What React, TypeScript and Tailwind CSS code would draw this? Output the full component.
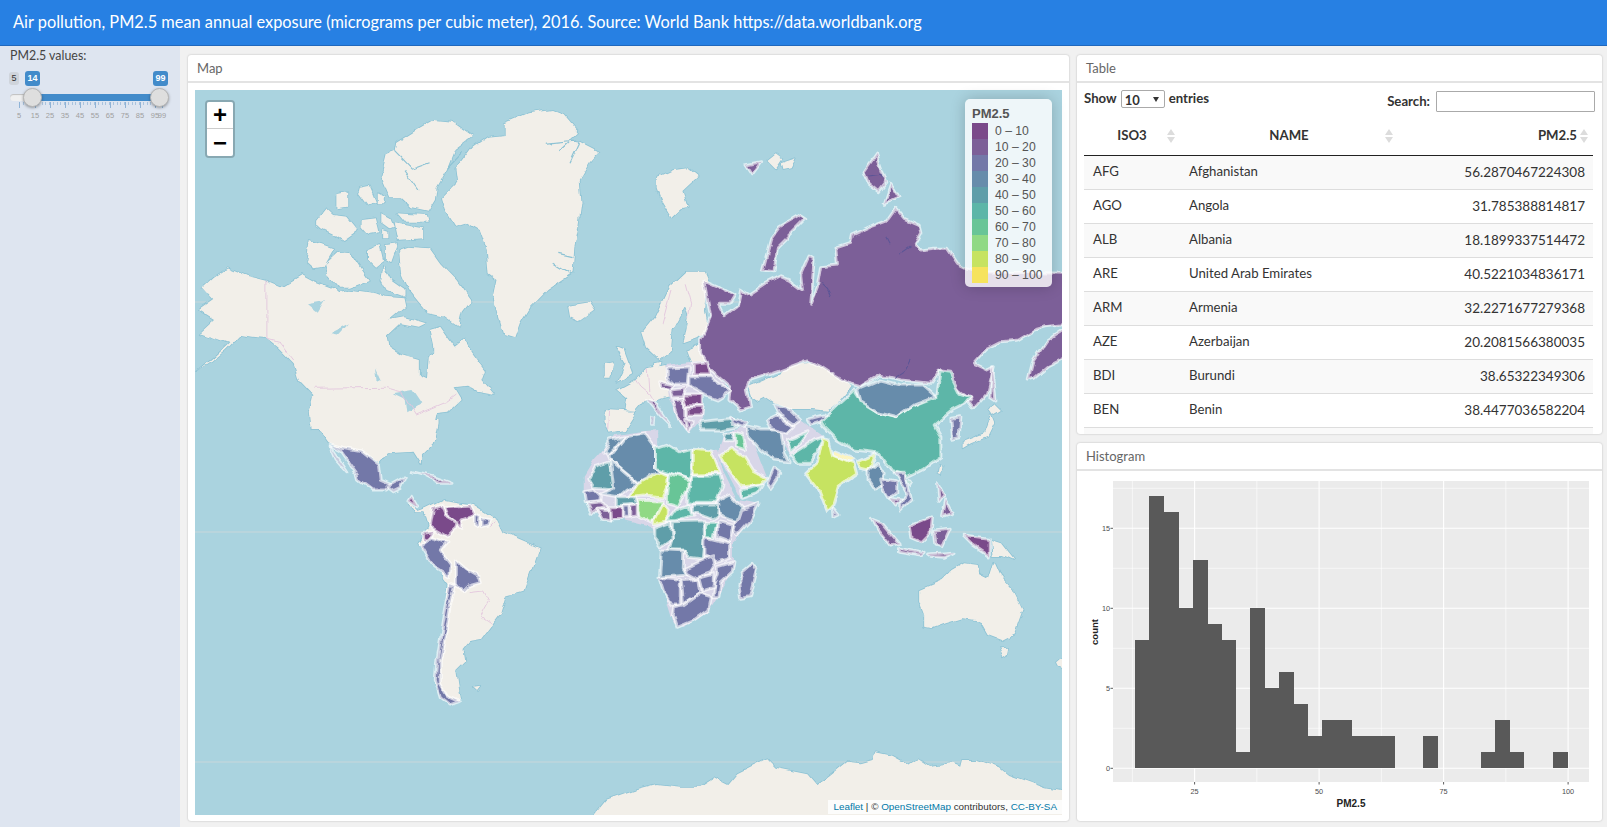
import React from "react";

type Origin = [number, number, number, number];

// crop origins the outlines were traced in
const Z6: Origin = [560, 340, 1 / 3, 1 / 3];
const Z7: Origin = [190, 90, 1 / 2.8, 1 / 3];
const Z8: Origin = [700, 140, 1 / 3, 1 / 3];
const Z9: Origin = [300, 420, 1 / 3, 1 / 3];
const Z10: Origin = [700, 640, 1 / 3, 1 / 3];
const Z11: Origin = [880, 540, 1 / 3, 1 / 3];

function toPage(o: Origin, pts: string) {
  return pts
    .trim()
    .split(/\s+/)
    .map((p) => {
      const [x, y] = p.split(",").map(Number);
      return `${(o[0] + x * o[2]).toFixed(1)},${(o[1] + y * o[3]).toFixed(1)}`;
    })
    .join(" ");
}

const C = [
  "#7a4a8a",
  "#7c5f98",
  "#7378a8",
  "#678cab",
  "#5f9ea9",
  "#5db6a8",
  "#68c597",
  "#90d985",
  "#c6e361",
  "#f6e35d",
];

const land: [Origin, string][] = [
  [Z7, "35,595 70,560 105,535 150,555 215,572 255,590 310,555 345,575 405,600 415,610 455,600 520,610 545,620 600,625 605,650 560,690 600,682 630,690 660,700 640,710 590,700 550,740 555,770 590,795 640,810 640,855 660,865 665,800 680,790 680,770 670,720 700,710 740,770 765,750 790,790 825,840 815,870 850,915 800,905 775,890 740,895 760,930 725,965 690,970 680,1020 340,1020 335,960 345,915 305,870 290,820 245,770 215,745 170,740 140,735 100,780 60,815 20,845 70,800 110,760 60,740 30,730 70,690 25,660 65,630"],
  [Z7, "945,70 1010,60 1045,75 1085,125 1060,150 1090,155 1145,185 1120,215 1090,270 1095,340 1085,420 1075,470 1070,550 1000,600 950,655 925,700 910,745 880,735 865,680 850,620 860,570 835,550 830,480 810,420 770,395 740,405 715,360 705,325 750,275 745,235 790,170 830,140 880,135 880,100"],
  [Z7, "680,90 730,95 790,140 740,180 720,235 690,290 685,330 665,365 620,355 590,325 560,325 535,260 550,195 575,185 580,155 640,115"],
  [Z7, "350,395 380,355 400,375 440,380 470,420 430,450 400,430 350,405"],
  [Z7, "475,290 500,285 520,335 495,345 470,310"],
  [Z7, "415,315 440,310 440,350 415,355"],
  [Z7, "525,310 545,320 545,340 525,340"],
  [Z7, "570,400 655,415 655,445 580,450"],
  [Z7, "580,370 660,375 665,395 600,395"],
  [Z7, "535,370 560,385 570,410 560,415 535,395"],
  [Z7, "480,390 520,385 530,430 500,435 480,410"],
  [Z7, "540,420 555,425 555,445 540,445"],
  [Z7, "335,450 400,475 370,530 345,535 325,515"],
  [Z7, "375,520 410,485 450,490 475,530 500,570 450,590 410,590 385,560"],
  [Z7, "495,480 530,465 540,510 515,530 495,510"],
  [Z7, "545,465 580,460 560,520 545,510"],
  [Z7, "585,480 610,470 670,475 700,520 745,570 785,630 760,665 750,710 710,680 665,670 640,640 610,600 590,550"],
  [Z7, "540,530 560,570 600,600 600,620 550,600 535,570"],
  [Z7, "1055,650 1115,640 1130,665 1090,695 1060,680"],
  [Z7, "1305,265 1355,240 1390,235 1420,260 1380,300 1395,350 1375,355 1345,385 1320,340 1305,300"],
  [Z7, "1262,730 1300,680 1340,590 1385,545 1440,545 1450,570 1440,660 1450,720 1420,745 1380,760 1395,680 1385,650 1350,720 1345,780 1310,810 1275,775"],
  [Z6, "165,20 190,30 215,100 170,125 195,70"],
  [Z6, "130,75 155,70 150,110 130,110"],
  [Z6, "170,150 225,120 260,85 315,75 325,130 335,170 280,185 255,180 225,215 195,210 200,175"],
  [Z6, "135,210 225,215 190,270 150,278 135,245"],
  [Z6, "280,70 300,65 295,85 282,85"],
  [Z6, "380,30 425,10 440,60 395,70"],
  [Z6, "565,140 660,100 670,80 745,65 800,80 870,140 830,190 800,215 750,210 690,210 640,190 610,170 590,180 575,170"],
  [Z6, "1205,325 1205,305 1270,280 1290,225 1300,250 1280,290 1230,310"],
  [Z6, "1285,210 1300,190 1320,210 1295,225"],
  [Z6, "1135,375 1142,380 1138,402 1130,400"],
  [Z8, "200,60 225,40 245,55 225,85"],
  [Z8, "240,70 285,55 270,85 245,90"],
  [Z9, "35,0 85,70 120,85 180,95 235,130 260,100 340,95 365,135 365,100 405,60 415,10 415,0"],
  [Z9, "370,270 430,240 520,255 590,300 610,340 715,385 685,470 670,515 615,530 600,580 540,660 510,665 490,690 495,720 465,750 470,790 480,845 440,850 405,790 430,620 445,490 370,390 355,375 385,320"],
  [Z9, "320,240 355,275 385,265 375,280 345,280"],
  [Z9, "520,800 540,797 530,810"],
  [Z11, "115,150 185,120 215,90 250,70 290,75 295,100 325,115 340,65 360,110 395,150 425,210 400,280 360,300 320,285 300,250 280,240 245,235 195,250 155,265 130,260 130,225 115,185"],
  [Z11, "355,322 385,320 380,345 368,352"],
  [Z11, "330,0 360,10 400,60 365,45 335,45"],
  [Z11, "525,370 543,355 543,385 530,380"],
  [Z10, "-350,560 -285,480 -200,450 -132,432 -60,440 0,440 40,415 80,435 110,400 170,370 200,355 225,380 320,400 350,435 385,410 440,365 480,370 515,360 525,340 575,350 620,375 650,355 685,378 750,370 775,380 780,360 830,360 900,385 925,405 1035,445 1120,460 1120,560"],
];

// pale bed under the packed country shapes, reads as the shared borders
const beds: [Origin, string][] = [
  [Z6, "70,410 100,360 135,320 165,285 230,275 290,270 290,320 340,330 400,325 470,330 490,400 530,480 590,490 560,550 520,610 520,680 470,770 440,820 370,860 340,850 300,720 310,640 270,560 190,540 120,530 70,470"],
  [Z6, "315,75 440,60 510,155 425,165 425,235 385,280 355,240 335,190 325,170"],
  [Z6, "490,280 560,260 620,415 540,475 470,340"],
  [Z6, "620,240 720,240 790,290 745,370 690,345"],
];

const lakes: [Origin, string][] = [
  [Z7, "330,640 380,630 360,665"],
  [Z7, "390,730 445,700 415,735"],
  [Z7, "570,910 625,900 650,940 605,970 600,925"],
  [Z7, "520,835 535,870 525,875"],
];

const borders: [Origin, string][] = [
  [Z7, "215,572 215,745 250,755 290,810"],
  [Z7, "345,895 545,892 590,905 630,975 720,935 745,915"],
  [Z7, "1385,580 1400,640 1395,680"],
  [Z7, "1320,700 1345,600"],
  [Z6, "225,120 235,135 265,160 280,185"],
  [Z6, "150,215 148,270"],
  [Z6, "260,85 265,150"],
  [Z9, "505,515 550,510 570,545 545,590 575,610"],
  [Z9, "570,320 585,305"],
];

const channels: [Origin, string][] = [
  [Z7, "575,185 620,235 670,215"],
  [Z7, "600,240 640,300"],
  [Z7, "720,235 760,190"],
  [Z7, "995,160 1080,150"],
  [Z7, "1030,185 1060,155"],
  [Z7, "1060,220 1090,150"],
  [Z7, "1030,490 1070,500"],
  [Z7, "1020,520 1065,550"],
];

const countries: [Origin, string, number][] = [
  // Russia and the far east
  [Z8, "10,420 55,440 100,465 85,490 50,490 70,530 110,500 120,450 145,465 190,435 240,410 265,420 305,450 300,400 325,345 340,355 335,430 330,490 350,440 360,380 410,375 405,325 450,310 455,285 520,255 560,240 585,205 610,235 655,255 660,275 640,310 655,330 700,325 740,325 770,370 800,385 830,395 1120,400 1120,550 1035,560 1000,570 950,600 900,605 860,625 820,670 860,690 880,680 860,760 815,810 800,790 810,775 770,745 715,690 690,730 600,720 540,705 480,740 440,730 390,700 360,680 320,660 240,690 150,720 140,750 145,770 150,800 120,810 85,780 90,740 50,705 30,690 0,640 0,600 30,530", 1],
  [Z8, "185,390 210,300 240,260 300,225 315,235 260,290 230,320 220,395", 1],
  [Z8, "130,75 180,65 150,105", 1],
  [Z8, "490,95 525,45 555,130 535,155 505,130", 1],
  [Z8, "570,130 595,170 550,190", 1],
  [Z8, "1120,545 1040,600 1000,660 985,720 1000,715 1040,680 1120,640", 1],
  [Z8, "875,680 885,780 870,770", 1],
  // Europe
  [Z6, "320,85 385,80 380,135 340,135 320,115", 2],
  [Z6, "395,70 440,65 450,105 395,105", 0],
  [Z6, "385,110 450,110 510,155 470,180 430,165 385,140", 2],
  [Z6, "370,165 425,165 425,197 380,197", 0],
  [Z6, "330,150 380,145 370,170 335,172", 1],
  [Z6, "300,125 340,135 330,148 305,143", 1],
  [Z6, "258,180 280,185 330,260 300,230", 1],
  [Z6, "340,180 370,175 378,200 380,270 360,240", 1],
  [Z6, "385,202 425,202 420,228 385,228", 0],
  [Z6, "375,235 395,250 385,275", 1],
  [Z6, "270,230 280,232 278,250 270,250", 2],
  // Africa
  [Z6, "130,335 150,300 190,290 165,320 140,345", 3],
  [Z6, "145,350 195,290 255,278 270,300 285,320 285,385 318,395 235,430 150,362", 3],
  [Z6, "85,420 105,380 135,370 150,365 165,435 160,450 100,445", 4],
  [Z6, "150,362 232,432 200,447 175,470 120,462 160,445", 3],
  [Z6, "232,432 300,393 320,402 318,440 305,470 245,465 205,470", 8],
  [Z6, "285,320 315,310 355,335 393,325 393,400 385,418 325,398 285,385", 5],
  [Z6, "325,400 385,420 385,450 370,470 355,500 318,490 318,465", 6],
  [Z6, "398,325 450,330 478,400 398,402", 8],
  [Z6, "393,405 480,405 490,440 470,490 430,490 385,490 385,450", 5],
  [Z6, "480,480 510,465 560,515 530,545 480,532 470,495", 3],
  [Z6, "540,510 595,490 570,540 530,585 520,570", 2],
  [Z6, "232,478 305,480 300,510 270,545 240,530 232,510", 7],
  [Z6, "305,490 320,510 320,545 280,555 280,540", 8],
  [Z6, "320,545 345,510 385,495 395,530 345,545", 5],
  [Z6, "395,495 475,495 470,530 455,540 430,530 395,520", 4],
  [Z6, "335,548 430,545 432,590 425,660 385,655 370,630 325,630 335,595", 4],
  [Z6, "280,565 330,548 335,595 300,620 280,595", 4],
  [Z6, "435,550 470,550 460,590 435,590", 5],
  [Z6, "470,545 520,555 510,605 470,590", 2],
  [Z6, "435,592 510,610 510,655 470,668 430,650 430,600", 2],
  [Z6, "305,630 325,630 370,632 368,685 378,703 300,708", 3],
  [Z6, "372,685 425,660 460,650 465,670 450,695 400,712 378,700", 2],
  [Z6, "470,680 520,665 515,695 478,730 472,770 455,770 460,735 470,705", 2],
  [Z6, "415,712 458,700 458,742 425,752", 2],
  [Z6, "365,722 412,718 418,760 372,790", 2],
  [Z6, "295,712 362,718 362,795 335,795 310,760", 2],
  [Z6, "342,800 368,795 418,760 452,770 445,810 400,842 350,862 338,825", 2],
  [Z6, "580,670 590,690 570,770 540,775 535,730 545,700", 2],
  [Z6, "70,455 100,450 120,470 118,485 75,488", 2],
  [Z6, "80,490 120,485 145,500 110,505 95,520", 1],
  [Z6, "110,505 148,510 148,540 125,535", 1],
  [Z6, "148,500 185,500 185,538 150,540", 0],
  [Z6, "170,470 225,470 232,492 170,497", 4],
  [Z6, "187,498 205,498 207,532 187,532", 2],
  [Z6, "208,498 230,495 230,528 208,530", 1],
  // Middle East and Asia
  [Z6, "480,345 510,325 550,350 575,390 620,415 600,435 545,440 510,395", 8],
  [Z6, "525,280 545,285 555,330 525,320", 6],
  [Z6, "540,450 605,435 590,460 545,475", 5],
  [Z6, "620,430 640,385 660,400 630,445", 2],
  [Z6, "555,260 600,270 660,270 670,340 685,365 640,360 600,330 565,290", 3],
  [Z6, "415,245 520,235 535,260 480,270 425,270", 4],
  [Z6, "490,280 520,280 515,305 490,305", 4],
  [Z6, "510,232 560,250 550,262 520,250", 2],
  [Z6, "620,240 650,225 700,260 680,280 630,265", 2],
  [Z6, "640,195 690,210 720,240 700,255 650,220", 2],
  [Z6, "740,238 790,225 800,240 750,255", 2],
  [Z6, "680,300 745,275 720,310 690,335", 5],
  [Z6, "690,345 760,300 790,290 770,330 745,370 710,370", 5],
  [Z6, "780,245 830,195 880,150 900,180 950,215 1010,230 1060,195 1125,165 1135,95 1170,100 1200,160 1230,170 1210,195 1170,215 1120,255 1140,290 1140,350 1090,385 1040,410 1000,395 960,340 880,330 830,300 790,260", 5],
  [Z6, "890,150 960,120 1020,135 1085,135 1125,170 1060,195 1010,230 950,215 900,185", 3],
  [Z6, "785,295 805,300 815,345 880,372 888,402 832,442 815,500 800,515 775,450 735,398 770,365", 8],
  [Z6, "820,335 880,360 870,365 820,345", 9],
  [Z6, "890,365 945,340 925,390 900,385", 8],
  [Z6, "925,385 950,365 970,400 965,440 945,450 925,420", 3],
  [Z6, "960,420 1005,430 1005,460 985,475 970,450", 2],
  [Z6, "1000,400 1030,400 1050,480 1020,510 1020,490 1035,460", 2],
  [Z6, "990,475 1020,480 1005,495", 1],
  [Z6, "818,505 835,525 820,532", 2],
  [Z6, "1170,235 1200,230 1195,290 1175,295", 2],
  [Z6, "1040,420 1055,425 1048,437", 5],
  [Z6, "935,535 960,545 1015,610 990,615 950,565", 1],
  [Z6, "1010,625 1090,640 1080,648 1010,637", 1],
  [Z6, "1100,645 1180,640 1150,655 1110,652", 1],
  [Z6, "1045,560 1115,530 1110,580 1085,605 1050,590", 0],
  [Z6, "1120,570 1165,565 1140,620 1125,615", 1],
  [Z6, "1210,585 1285,595 1285,645 1240,615", 0],
  [Z6, "1130,430 1150,470 1135,490", 1],
  [Z6, "1155,480 1175,520 1145,530", 1],
  // Americas
  [Z9, "90,75 125,85 185,95 235,135 240,180 275,195 255,210 215,210 175,180 170,160 120,90", 2],
  [Z9, "90,80 140,155 105,115", 2],
  [Z9, "260,200 315,170 300,205 280,215", 2],
  [Z9, "330,225 350,260 320,240", 0],
  [Z9, "335,155 400,170 455,190 420,190 370,165", 1],
  [Z9, "430,260 510,255 525,285 485,300 480,325 460,300 440,285", 0],
  [Z9, "400,265 425,255 435,285 470,305 465,325 440,350 390,320", 0],
  [Z9, "370,340 400,335 385,365 370,355", 0],
  [Z9, "360,375 395,350 440,365 420,390 450,430 445,470 400,440", 2],
  [Z9, "465,420 500,450 535,470 540,485 505,495 490,510 465,495", 2],
  [Z9, "525,285 540,290 535,320 525,315", 2],
  [Z9, "545,295 570,300 565,315 545,320", 2],
  [Z9, "450,490 465,495 450,560 435,650 420,720 420,790 445,830 480,845 450,855 420,830 405,780 410,720 430,600", 2],
];

const rivers: [Origin, string][] = [
  [Z8, "580,715 610,695 628,660"],
  [Z8, "598,342 630,320"],
  [Z8, "365,430 380,445 390,465"],
  [Z8, "505,105 540,100 545,115"],
  [Z8, "555,290 565,310"],
];

function WorldMap() {
  return (
    <svg
      viewBox="195 90 866 725"
      preserveAspectRatio="none"
      className="block h-full w-full bg-[#aad3df]"
    >
      <defs>
        <filter id="coast" filterUnits="userSpaceOnUse" x={175} y={70} width={910} height={770} colorInterpolationFilters="sRGB">
          <feTurbulence type="fractalNoise" baseFrequency={0.055} numOctaves={3} seed={4} result="noise" />
          <feDisplacementMap in="SourceGraphic" in2="noise" scale={7} xChannelSelector="R" yChannelSelector="G" result="moved" />
          <feGaussianBlur in="moved" stdDeviation={0.4} />
        </filter>
      </defs>
      {[302, 532, 762].map((y) => (
        <line key={y} x1={195} x2={1061} y1={y} y2={y} stroke="#d4dcdc" strokeOpacity={0.7} />
      ))}
      <g filter="url(#coast)">
        {land.map(([o, p], i) => (
          <polygon key={i} points={toPage(o, p)} fill="none" stroke="#8cc2d4" strokeWidth={1.6} strokeLinejoin="round" />
        ))}
        {land.map(([o, p], i) => (
          <polygon key={i} points={toPage(o, p)} fill="#f2efe9" />
        ))}
        {lakes.map(([o, p], i) => (
          <polygon key={i} points={toPage(o, p)} fill="#aad3df" />
        ))}
        {channels.map(([o, p], i) => (
          <polyline key={i} points={toPage(o, p)} fill="none" stroke="#8cc2d4" strokeWidth={1.2} />
        ))}
        {borders.map(([o, p], i) => (
          <polyline key={i} points={toPage(o, p)} fill="none" stroke="#e3c6de" strokeWidth={0.9} />
        ))}
        {beds.map(([o, p], i) => (
          <polygon key={i} points={toPage(o, p)} fill="#d8d6e8" />
        ))}
        {countries.map(([o, p, c], i) => (
          <polygon
            key={i}
            points={toPage(o, p)}
            fill={C[c]}
            stroke="#ffffff"
            strokeOpacity={0.62}
            strokeWidth={3}
            strokeLinejoin="round"
          />
        ))}
        {rivers.map(([o, p], i) => (
          <polyline key={i} points={toPage(o, p)} fill="none" stroke="#5b5596" strokeWidth={1} />
        ))}
      </g>
    </svg>
  );
}

const legend = ["0 – 10", "10 – 20", "20 – 30", "30 – 40", "40 – 50", "50 – 60", "60 – 70", "70 – 80", "80 – 90", "90 – 100"];

function Legend() {
  return (
    <div className="absolute right-[10px] top-[9px] h-[188px] w-[87px] rounded-[5px] bg-white/80 pl-[7px] pt-[5px] font-['Liberation_Sans',sans-serif] text-[#555] shadow-[0_0_15px_rgba(0,0,0,0.2)]">
      <div className="h-[19px] text-[13px] font-bold leading-[19px]">PM2.5</div>
      {legend.map((label, i) => (
        <div key={label} className="flex h-4 items-center text-[12.2px] leading-4">
          <span className="mr-[7px] h-4 w-4" style={{ background: C[i] }} />
          {label}
        </div>
      ))}
    </div>
  );
}

function ZoomControl() {
  return (
    <div className="absolute left-[10px] top-[10px] w-[30px] rounded-[4px] border-2 border-black/20 bg-clip-padding font-['Liberation_Sans',sans-serif] text-black">
      <div className="flex h-[27px] items-center justify-center rounded-t-[2px] border-b border-[#ccc] bg-white text-[24px] font-bold leading-none">+</div>
      <div className="flex h-[27px] items-center justify-center rounded-b-[2px] bg-white text-[24px] font-bold leading-none">−</div>
    </div>
  );
}

function Card({ title, className, children }: { title: string; className: string; children: React.ReactNode }) {
  return (
    <div className={`flex flex-col overflow-hidden rounded-[3px] bg-white shadow-[0_0_2px_rgba(0,0,0,0.25)] ${className}`}>
      <div className="h-[28px] shrink-0 border-b-2 border-[#e3e3e3] pl-[9px] text-[13px] leading-[27px] text-[#666]">{title}</div>
      {children}
    </div>
  );
}

function SortIcon({ className }: { className: string }) {
  return (
    <svg viewBox="0 0 8 14" className={`absolute h-[14px] w-2 ${className}`}>
      <path d="M4 0 8 6H0Z M4 14 0 8H8Z" fill="#dcdcdc" />
    </svg>
  );
}

const rows = [
  ["AFG", "Afghanistan", "56.2870467224308"],
  ["AGO", "Angola", "31.785388814817"],
  ["ALB", "Albania", "18.1899337514472"],
  ["ARE", "United Arab Emirates", "40.5221034836171"],
  ["ARM", "Armenia", "32.2271677279368"],
  ["AZE", "Azerbaijan", "20.2081566380035"],
  ["BDI", "Burundi", "38.65322349306"],
  ["BEN", "Benin", "38.4477036582204"],
];

function DataTable() {
  return (
    <div className="min-h-0 flex-1 overflow-hidden px-[7px] text-[13.2px] text-[#333]">
      <div className="flex h-[31px] items-start justify-between font-bold">
        <label className="mt-[7px] flex h-[18px] items-center gap-1">
          Show
          <span className="relative">
            <select defaultValue="10" className="block h-[18px] w-[44px] appearance-none rounded-[2px] border border-[#aaa] bg-white pl-[3px] text-[13px] font-bold">
              <option value="10">10</option>
              <option value="25">25</option>
            </select>
            <span className="pointer-events-none absolute right-[6px] top-[7px] h-0 w-0 border-x-[3.5px] border-t-[5px] border-x-transparent border-t-[#333]" />
          </span>
          entries
        </label>
        <label className="mt-[8px] flex items-center gap-[6px]">
          Search:
          <input className="h-[21px] w-[159px] rounded-[1px] border border-[#aaa] bg-white" />
        </label>
      </div>
      <table className="w-[509px] table-fixed border-collapse">
        <thead>
          <tr className="h-[41px] border-b border-[#222] font-bold">
            <th className="relative w-[96px] pt-[4px] text-center">
              ISO3
              <SortIcon className="right-[5px] top-[15px]" />
            </th>
            <th className="relative w-[218px] pt-[4px] text-center">
              NAME
              <SortIcon className="right-[5px] top-[15px]" />
            </th>
            <th className="relative w-[195px] pr-4 pt-[4px] text-right">
              PM2.5
              <SortIcon className="right-[5px] top-[15px]" />
            </th>
          </tr>
        </thead>
        <tbody>
          {rows.map((r, i) => (
            <tr key={r[0]} className={`h-[34px] border-b border-[#ddd] ${i % 2 === 0 ? "bg-[#f9f9f9]" : "bg-white"}`}>
              <td className="pl-[9px]">{r[0]}</td>
              <td className="pl-[9px]">{r[1]}</td>
              <td className="pr-[8px] text-right text-[13.5px]">{r[2]}</td>
            </tr>
          ))}
          <tr className="h-[34px] bg-[#f9f9f9]">
            <td colSpan={3} />
          </tr>
        </tbody>
      </table>
    </div>
  );
}

const bins = [8, 17, 16, 10, 13, 9, 8, 1, 10, 5, 6, 4, 2, 3, 3, 2, 2, 2, 0, 0, 2, 0, 0, 0, 1, 3, 1, 0, 0, 1];
const yAt = (v: number) => 768.3 - v * 16;
const xAt = (v: number) => 1070.1 + v * 4.98;

function Histogram() {
  return (
    <svg viewBox="1078 471 523 350" className="block min-h-0 w-full flex-1 font-['Liberation_Sans',sans-serif]">
      <rect x={1113} y={481} width={476} height={301} fill="#ebebeb" />
      {[2.5, 7.5, 12.5, 17.5].map((v) => (
        <line key={v} x1={1113} x2={1589} y1={yAt(v)} y2={yAt(v)} stroke="#fff" strokeWidth={0.6} />
      ))}
      {[12.5, 37.5, 62.5, 87.5].map((v) => (
        <line key={v} y1={481} y2={782} x1={xAt(v)} x2={xAt(v)} stroke="#fff" strokeWidth={0.6} />
      ))}
      {[0, 5, 10, 15].map((v) => (
        <g key={v}>
          <line x1={1113} x2={1589} y1={yAt(v)} y2={yAt(v)} stroke="#fff" strokeWidth={1.1} />
          <line x1={1110.5} x2={1113} y1={yAt(v)} y2={yAt(v)} stroke="#333" strokeWidth={0.8} />
          <text x={1110} y={yAt(v) + 2.6} textAnchor="end" fontSize={7.3} fill="#4d4d4d">
            {v}
          </text>
        </g>
      ))}
      {[25, 50, 75, 100].map((v) => (
        <g key={v}>
          <line y1={481} y2={782} x1={xAt(v)} x2={xAt(v)} stroke="#fff" strokeWidth={1.1} />
          <line y1={782} y2={784.5} x1={xAt(v)} x2={xAt(v)} stroke="#333" strokeWidth={0.8} />
          <text x={xAt(v)} y={793.5} textAnchor="middle" fontSize={7.3} fill="#4d4d4d">
            {v}
          </text>
        </g>
      ))}
      <g shapeRendering="crispEdges">
        {bins.map((n, i) =>
          n > 0 ? <rect key={i} x={1135 + i * 14.4} y={yAt(n)} width={15} height={n * 16} fill="#595959" /> : null,
        )}
      </g>
      <text x={1351} y={806.5} textAnchor="middle" fontSize={10} fontWeight={700} fill="#222">
        PM2.5
      </text>
      <text transform="translate(1097.5 632) rotate(-90)" textAnchor="middle" fontSize={9.5} fontWeight={700} fill="#222">
        count
      </text>
    </svg>
  );
}

const scale = [
  { label: "5", x: 19 },
  { label: "15", x: 35 },
  { label: "25", x: 50 },
  { label: "35", x: 65 },
  { label: "45", x: 80 },
  { label: "55", x: 95 },
  { label: "65", x: 110 },
  { label: "75", x: 125 },
  { label: "85", x: 140 },
  { label: "95", x: 155 },
  { label: "99", x: 162 },
];
const minorTicks = Array.from({ length: 37 }, (_, i) => 19 + i * 3.75);

function Slider() {
  return (
    <div className="relative mt-[4px] h-[54px] w-[180px] font-['Liberation_Sans',sans-serif]">
      <span className="absolute left-[9px] top-[3px] flex h-[13px] w-[10px] items-center justify-center rounded-[3px] bg-[#cfd4db] text-[9px] text-[#333]">5</span>
      <span className="absolute left-[25px] top-[2px] flex h-[15px] w-[15px] items-center justify-center rounded-[3px] bg-[#428bca] text-[9px] font-bold text-white">14</span>
      <span className="absolute left-[153px] top-[2px] flex h-[15px] w-[15px] items-center justify-center rounded-[3px] bg-[#428bca] text-[9px] font-bold text-white">99</span>
      <div className="absolute left-[10px] top-[25px] h-[7px] w-[25px] rounded-l-full bg-[#f0f0f0] shadow-[inset_0_1px_1px_rgba(0,0,0,0.2)]" />
      <div className="absolute left-[32px] top-[25px] h-[7px] w-[128px] bg-[#428bca]" />
      {minorTicks.map((x) => (
        <span key={x} className="absolute top-[33px] h-[3px] w-px bg-[#a9c3de]" style={{ left: x }} />
      ))}
      {scale.map((s) => (
        <span key={s.label} className="absolute top-[33px] h-[6px] w-px bg-[#8fb3d6]" style={{ left: s.x }} />
      ))}
      {scale.map((s) => (
        <span key={s.label} className="absolute top-[42px] -translate-x-1/2 text-[7.5px] leading-[10px] text-[#a0a0a0]" style={{ left: s.x }}>
          {s.label}
        </span>
      ))}
      <div className="absolute left-[23px] top-[19px] h-[19px] w-[19px] rounded-full border border-[#b5b5b5] bg-[#dedede] shadow-[0_1px_3px_rgba(0,0,0,0.35)]" />
      <div className="absolute left-[150px] top-[19px] h-[19px] w-[19px] rounded-full border border-[#b5b5b5] bg-[#dedede] shadow-[0_1px_3px_rgba(0,0,0,0.35)]" />
    </div>
  );
}

export default function App() {
  return (
    <div className="flex h-screen flex-col overflow-hidden bg-[#f1f1f1] font-['Lato',sans-serif]">
      <header className="h-[46px] shrink-0 border-b border-[#2068bd] bg-[#2780e3] pl-[13px] text-[16.35px] leading-[44px] text-white">
        Air pollution, PM2.5 mean annual exposure (micrograms per cubic meter), 2016. Source: World Bank https://data.worldbank.org
      </header>
      <div className="flex min-h-0 flex-1">
        <aside className="w-[180px] shrink-0 bg-[#dee5f0]">
          <div className="pl-[10px] pt-[1px] text-[12.4px] leading-[18px] text-[#444]">PM2.5 values:</div>
          <Slider />
        </aside>
        <main className="flex min-w-0 flex-1 gap-2 pb-[6px] pl-2 pr-[5px] pt-[9px]">
          <Card title="Map" className="w-[881px]">
            <div className="relative mx-[7px] mb-[6px] mt-[7px] min-h-0 flex-1">
              <WorldMap />
              <ZoomControl />
              <Legend />
              <div className="absolute bottom-[1px] right-0 flex h-[14px] items-center bg-white/80 px-[5px] font-['Liberation_Sans',sans-serif] text-[9.9px] text-[#333]">
                <span className="text-[#0078a8]">Leaflet</span>
                <span className="whitespace-pre"> | © </span>
                <span className="text-[#0078a8]">OpenStreetMap</span>
                <span className="whitespace-pre"> contributors, </span>
                <span className="text-[#0078a8]">CC-BY-SA</span>
              </div>
            </div>
          </Card>
          <div className="flex w-[525px] flex-col gap-[9px]">
            <Card title="Table" className="h-[379px] shrink-0">
              <DataTable />
            </Card>
            <Card title="Histogram" className="min-h-0 flex-1">
              <Histogram />
            </Card>
          </div>
        </main>
      </div>
    </div>
  );
}
